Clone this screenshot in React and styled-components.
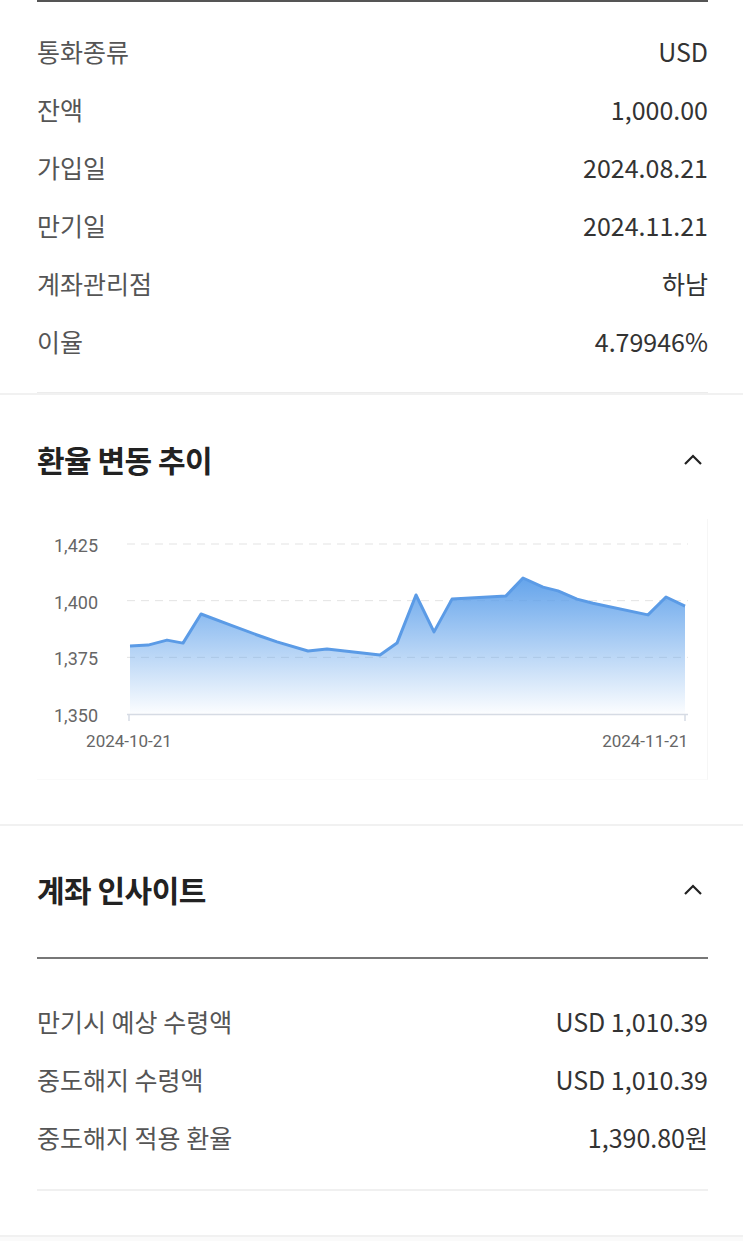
import React from "react";
import styled, { createGlobalStyle } from "styled-components";

const GlobalStyle = createGlobalStyle`
  body {
    margin: 0;
    background: #fff;
    font-family: "Noto Sans CJK KR", "Noto Sans", sans-serif;
  }
`;

// Data
const accountInfo = [
  { label: "통화종류", value: "USD" },
  { label: "잔액", value: "1,000.00" },
  { label: "가입일", value: "2024.08.21" },
  { label: "만기일", value: "2024.11.21" },
  { label: "계좌관리점", value: "하남" },
  { label: "이율", value: "4.79946%" },
];

const insights = [
  { label: "만기시 예상 수령액", value: "USD 1,010.39" },
  { label: "중도해지 수령액", value: "USD 1,010.39" },
  { label: "중도해지 적용 환율", value: "1,390.80원" },
];

// [x position, rate]
const rates = [
  [93, 1380.0], [111, 1380.4], [130, 1382.6], [146, 1381.3], [164, 1394.1],
  [193, 1389.3], [223, 1384.4], [240, 1381.8], [271, 1377.8], [290, 1378.7],
  [343, 1376.0], [360, 1381.3], [379, 1402.5], [397, 1386.2], [415, 1400.7],
  [469, 1402.1], [486, 1410.0], [506, 1406.0], [521, 1404.3], [540, 1400.7],
  [556, 1398.9], [611, 1393.7], [629, 1401.6], [648, 1397.6],
];

// Styled Components
const Page = styled.div`
  width: 743px;
  background: #fff;
`;

const Section = styled.section`
  padding: ${(props) => props.$pad || "0"};
  border-bottom: 2px solid #f1f1f1;
`;

const Inner = styled.div`
  margin: 0 35px 0 37px;
`;

const Rule = styled.div`
  height: ${(props) => props.$h || 1}px;
  background: ${(props) => props.$color || "#ebebeb"};
`;

const List = styled.div`
  display: flex;
  flex-direction: column;
  padding: ${(props) => props.$pad || "20px 0 22px"};
`;

const Row = styled.div`
  height: 58px;
  display: flex;
  align-items: center;
  justify-content: space-between;
  font-size: 25px;
  line-height: 1;
`;

const Label = styled.span`
  color: #555;
`;

const Value = styled.span`
  color: #333;
`;

const Header = styled.div`
  height: 40px;
  display: flex;
  align-items: center;
  justify-content: space-between;
  margin: ${(props) => props.$margin || "0"};
`;

const Title = styled.h2`
  margin: 0;
  font-size: 30px;
  font-weight: 700;
  color: #222;
  letter-spacing: -0.5px;
`;

const Toggle = styled.button`
  border: 0;
  background: none;
  padding: 0;
  width: 24px;
  height: 24px;
  display: flex;
  align-items: center;
  justify-content: center;
  margin-right: 3px;
`;

const ChartBox = styled.div`
  height: 260px;
  border-right: 1px solid #f6f6f6;
  border-bottom: 1px solid #fafafa;
`;

const Footer = styled.div`
  height: 8px;
  background: #fafafa;
`;

const Chevron = () => (
  <svg width="22" height="14" viewBox="0 0 22 14">
    <path d="M3 12 L11 4 L19 12" fill="none" stroke="#222" strokeWidth="2.2" />
  </svg>
);

const toY = (v) => 195 - ((v - 1350) * 170) / 75;

const RateChart = () => {
  const pts = rates.map(([x, v]) => `${x},${toY(v).toFixed(1)}`);
  const line = `M${pts.join(" L")}`;
  const area = `${line} L648,195 L93,195 Z`;
  const ticks = [1425, 1400, 1375];

  return (
    <svg width="671" height="260" viewBox="0 0 671 260">
      <defs>
        <linearGradient id="rateFill" x1="0" y1="0" x2="0" y2="1">
          <stop offset="0" stopColor="#5c9fea" stopOpacity="0.95" />
          <stop offset="1" stopColor="#5c9fea" stopOpacity="0.02" />
        </linearGradient>
      </defs>
      {ticks.map((t) => (
        <line
          key={t}
          x1="90"
          x2="651"
          y1={toY(t)}
          y2={toY(t)}
          stroke="#e3e3e3"
          strokeDasharray="8 6"
        />
      ))}
      {[1425, 1400, 1375, 1350].map((t) => (
        <text
          key={t}
          x="61"
          y={toY(t) + 8}
          textAnchor="end"
          fontSize="18"
          fontFamily="Roboto, sans-serif"
          fill="#666"
        >
          {t.toLocaleString("en-US")}
        </text>
      ))}
      <path d={area} fill="url(#rateFill)" />
      <path d={line} fill="none" stroke="#5b9be6" strokeWidth="3" strokeLinejoin="round" />
      <line x1="90" x2="651" y1="195.5" y2="195.5" stroke="#d6dbe4" strokeWidth="1.5" />
      <line x1="92" x2="92" y1="195" y2="202" stroke="#d6dbe4" strokeWidth="1.5" />
      <line x1="648" x2="648" y1="195" y2="202" stroke="#d6dbe4" strokeWidth="1.5" />
      <text x="92" y="228" textAnchor="middle" fontSize="17" fontFamily="Roboto, sans-serif" fill="#666">
        2024-10-21
      </text>
      <text x="651" y="228" textAnchor="end" fontSize="17" fontFamily="Roboto, sans-serif" fill="#666">
        2024-11-21
      </text>
    </svg>
  );
};

const App = () => {
  return (
    <Page>
      <GlobalStyle />
      <Section>
        <Inner>
          <Rule $h={2} $color="#555" />
          <List>
            {accountInfo.map((r) => (
              <Row key={r.label}>
                <Label>{r.label}</Label>
                <Value>{r.value}</Value>
              </Row>
            ))}
          </List>
          <Rule $color="#ececec" />
        </Inner>
      </Section>

      <Section $pad="0 0 44px">
        <Inner>
          <Header $margin="44px 0 40px">
            <Title>환율 변동 추이</Title>
            <Toggle>
              <Chevron />
            </Toggle>
          </Header>
          <ChartBox>
            <RateChart />
          </ChartBox>
        </Inner>
      </Section>

      <Section $pad="0 0 44px">
        <Inner>
          <Header $margin="43px 0 48px">
            <Title>계좌 인사이트</Title>
            <Toggle>
              <Chevron />
            </Toggle>
          </Header>
          <Rule $h={1.5} $color="#777" />
          <List $pad="34px 0 22px">
            {insights.map((r) => (
              <Row key={r.label}>
                <Label>{r.label}</Label>
                <Value>{r.value}</Value>
              </Row>
            ))}
          </List>
          <Rule $h={2} $color="#f0f0f0" />
        </Inner>
      </Section>
      <Footer />
    </Page>
  );
};

export default App;
